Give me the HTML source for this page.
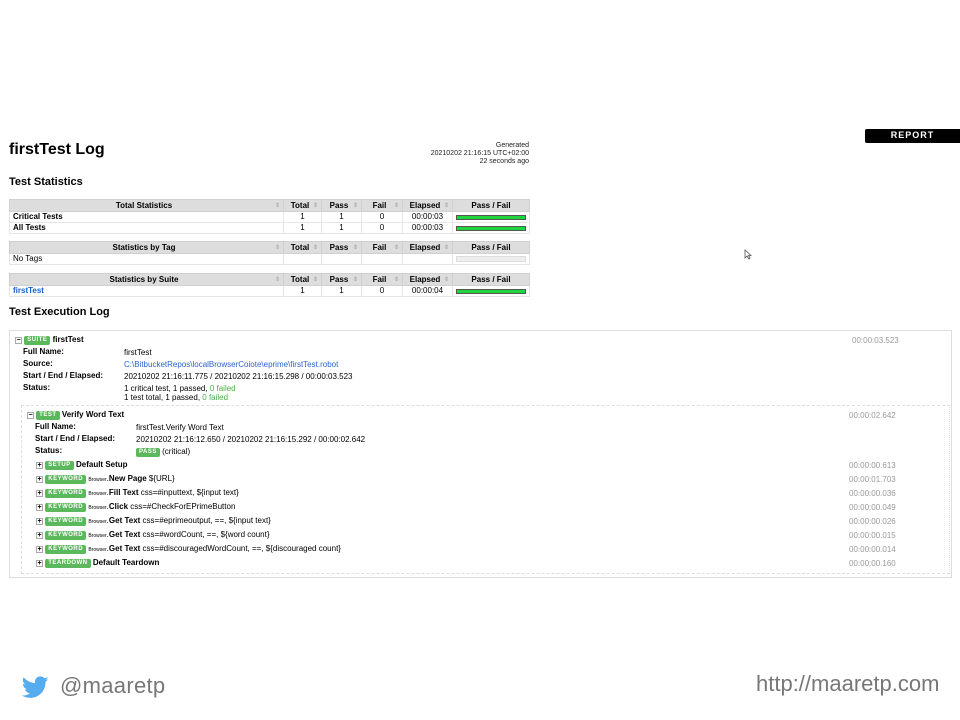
<!DOCTYPE html>
<html><head><meta charset="utf-8"><style>
*{margin:0;padding:0;box-sizing:border-box}
body{width:960px;height:720px;background:#fff;position:relative;overflow:hidden;font-family:"Liberation Sans",Arial,sans-serif;color:#000}
.a{position:absolute;white-space:nowrap}
table{position:absolute;left:9px;width:521px;border-collapse:collapse;font-size:8px}
td,th{height:11px;padding:0 3px;border:1px solid #e6e6e6;line-height:10px}
th{background:#ddd;font-weight:bold;text-align:center;border-color:#d0d0d0;height:12px}
th .s{float:right;color:#999;font-size:6px;font-weight:normal}
td.c{text-align:center}
.bar{height:5px;background:#1fd43d;border:1px solid #555;margin:0 auto}
.bar0{height:6px;background:#eee;border:1px solid #ddd}
.b{font-weight:bold}
.lbl{display:inline-block;background:#5cb85c;color:#fff;font-size:6px;font-weight:bold;padding:0 3px;height:9px;line-height:9px;border-radius:2px;letter-spacing:.5px;vertical-align:1px}
.pm{display:inline-block;width:7px;height:7px;border:1px solid #aaa;font-size:7px;line-height:5px;text-align:center;vertical-align:0;color:#000;font-weight:bold}
.t{font-size:8px;line-height:10px}
.g{color:#4cae4c}
.tm{color:#999;font-size:8px}
</style></head><body>
<div class="a" style="left:865px;top:129px;width:95px;height:14px;background:#000;border-radius:2px 0 0 2px;color:#fff;font-size:9px;font-weight:bold;letter-spacing:1px;text-align:center;line-height:13px">REPORT</div>
<div class="a" style="left:9px;top:141px;font-size:16px;font-weight:bold">firstTest Log</div>
<div class="a" style="left:400px;top:142px;width:129px;text-align:right;font-size:7px;line-height:8px;color:#222">Generated<br>20210202 21:16:15 UTC+02:00<br>22 seconds ago</div>
<div class="a" style="left:9px;top:176px;font-size:11px;font-weight:bold">Test Statistics</div>

<table style="top:199px">
<tr><th style="width:274px">Total Statistics <span class="s">⇕</span></th><th style="width:38px">Total <span class="s">⇕</span></th><th style="width:40px">Pass <span class="s">⇕</span></th><th style="width:41px">Fail <span class="s">⇕</span></th><th style="width:50px">Elapsed <span class="s">⇕</span></th><th>Pass / Fail</th></tr>
<tr><td class="b">Critical Tests</td><td class="c">1</td><td class="c">1</td><td class="c">0</td><td class="c">00:00:03</td><td><div class="bar"></div></td></tr>
<tr><td class="b">All Tests</td><td class="c">1</td><td class="c">1</td><td class="c">0</td><td class="c">00:00:03</td><td><div class="bar"></div></td></tr>
</table>
<table style="top:241px">
<tr><th style="width:274px">Statistics by Tag <span class="s">⇕</span></th><th style="width:38px">Total <span class="s">⇕</span></th><th style="width:40px">Pass <span class="s">⇕</span></th><th style="width:41px">Fail <span class="s">⇕</span></th><th style="width:50px">Elapsed <span class="s">⇕</span></th><th>Pass / Fail</th></tr>
<tr><td>No Tags</td><td></td><td></td><td></td><td></td><td><div class="bar0"></div></td></tr>
</table>
<table style="top:273px">
<tr><th style="width:274px">Statistics by Suite <span class="s">⇕</span></th><th style="width:38px">Total <span class="s">⇕</span></th><th style="width:40px">Pass <span class="s">⇕</span></th><th style="width:41px">Fail <span class="s">⇕</span></th><th style="width:50px">Elapsed <span class="s">⇕</span></th><th>Pass / Fail</th></tr>
<tr><td class="b" style="color:#1a5fd0">firstTest</td><td class="c">1</td><td class="c">1</td><td class="c">0</td><td class="c">00:00:04</td><td><div class="bar"></div></td></tr>
</table>

<div class="a" style="left:9px;top:306px;font-size:11px;font-weight:bold">Test Execution Log</div>
<div class="a" style="left:9px;top:330px;width:943px;height:248px;border:1px solid #ddd"></div>
<div class="a" style="left:21px;top:405px;width:929px;height:169px;border:1px dashed #ddd;border-right-style:dotted"></div>

<div class="a t" style="left:15px;top:335px"><span class="pm">−</span> <span class="lbl">SUITE</span> <b>firstTest</b></div>
<div class="a tm" style="left:852px;top:336px">00:00:03.523</div>
<div class="a t b" style="left:23px;top:347px">Full Name:</div><div class="a t" style="left:124px;top:348px">firstTest</div>
<div class="a t b" style="left:23px;top:359px">Source:</div><div class="a t" style="left:124px;top:360px;color:#2d62d3">C:\BitbucketRepos\localBrowserCoiote\eprime\firstTest.robot</div>
<div class="a t b" style="left:23px;top:371px">Start / End / Elapsed:</div><div class="a t" style="left:124px;top:372px">20210202 21:16:11.775 / 20210202 21:16:15.298 / 00:00:03.523</div>
<div class="a t b" style="left:23px;top:383px">Status:</div><div class="a t" style="left:124px;top:384px">1 critical test, 1 passed, <span class="g">0 failed</span></div>
<div class="a t" style="left:124px;top:393px">1 test total, 1 passed, <span class="g">0 failed</span></div>

<div class="a t" style="left:27px;top:410px"><span class="pm">−</span> <span class="lbl">TEST</span> <b>Verify Word Text</b></div>
<div class="a tm" style="left:849px;top:411px">00:00:02.642</div>
<div class="a t b" style="left:35px;top:422px">Full Name:</div><div class="a t" style="left:136px;top:423px">firstTest.Verify Word Text</div>
<div class="a t b" style="left:35px;top:434px">Start / End / Elapsed:</div><div class="a t" style="left:136px;top:435px">20210202 21:16:12.650 / 20210202 21:16:15.292 / 00:00:02.642</div>
<div class="a t b" style="left:35px;top:446px">Status:</div><div class="a t" style="left:136px;top:447px"><span class="lbl">PASS</span> (critical)</div>

<div class="a t" style="left:36px;top:460px"><span class="pm">+</span> <span class="lbl">SETUP</span> <b>Default Setup</b></div><div class="a tm" style="left:849px;top:461px">00:00:00.613</div>
<div class="a t" style="left:36px;top:474px"><span class="pm">+</span> <span class="lbl">KEYWORD</span> <span style="font-size:5px">Browser</span>.<b>New Page</b> ${URL}</div><div class="a tm" style="left:849px;top:475px">00:00:01.703</div>
<div class="a t" style="left:36px;top:488px"><span class="pm">+</span> <span class="lbl">KEYWORD</span> <span style="font-size:5px">Browser</span>.<b>Fill Text</b> css=#inputtext, ${input text}</div><div class="a tm" style="left:849px;top:489px">00:00:00.036</div>
<div class="a t" style="left:36px;top:502px"><span class="pm">+</span> <span class="lbl">KEYWORD</span> <span style="font-size:5px">Browser</span>.<b>Click</b> css=#CheckForEPrimeButton</div><div class="a tm" style="left:849px;top:503px">00:00:00.049</div>
<div class="a t" style="left:36px;top:516px"><span class="pm">+</span> <span class="lbl">KEYWORD</span> <span style="font-size:5px">Browser</span>.<b>Get Text</b> css=#eprimeoutput, ==, ${input text}</div><div class="a tm" style="left:849px;top:517px">00:00:00.026</div>
<div class="a t" style="left:36px;top:530px"><span class="pm">+</span> <span class="lbl">KEYWORD</span> <span style="font-size:5px">Browser</span>.<b>Get Text</b> css=#wordCount, ==, ${word count}</div><div class="a tm" style="left:849px;top:531px">00:00:00.015</div>
<div class="a t" style="left:36px;top:544px"><span class="pm">+</span> <span class="lbl">KEYWORD</span> <span style="font-size:5px">Browser</span>.<b>Get Text</b> css=#discouragedWordCount, ==, ${discouraged count}</div><div class="a tm" style="left:849px;top:545px">00:00:00.014</div>
<div class="a t" style="left:36px;top:558px"><span class="pm">+</span> <span class="lbl">TEARDOWN</span> <b>Default Teardown</b></div><div class="a tm" style="left:849px;top:559px">00:00:00.160</div>

<svg class="a" style="left:744px;top:249px" width="8" height="11" viewBox="0 0 8 11"><path d="M1 1 L1 9 L3 7 L5 10 L6 9 L4.5 6.5 L7 6.5 Z" fill="#fff" stroke="#555" stroke-width=".8"/></svg>

<svg class="a" style="left:22px;top:676px" width="27" height="23" viewBox="0 0 24 20"><path d="M23.6 2.4c-.9.4-1.8.6-2.8.8 1-.6 1.8-1.5 2.1-2.7-.9.6-2 1-3.1 1.2C18.9.7 17.7.1 16.3.1c-2.7 0-4.8 2.2-4.8 4.8 0 .4 0 .8.1 1.1C7.5 5.8 3.9 3.9 1.5.9c-.4.7-.7 1.6-.7 2.4 0 1.7.9 3.2 2.2 4-.8 0-1.5-.2-2.2-.6v.1c0 2.3 1.7 4.3 3.9 4.7-.4.1-.8.2-1.3.2-.3 0-.6 0-.9-.1.6 1.9 2.4 3.3 4.5 3.4-1.7 1.3-3.7 2.1-6 2.1-.4 0-.8 0-1.2-.1 2.1 1.4 4.7 2.2 7.4 2.2 8.9 0 13.7-7.4 13.7-13.7v-.6c1-.7 1.8-1.6 2.4-2.5z" fill="#55acee"/></svg>
<div class="a" style="left:60px;top:673px;font-size:22px;color:#777;font-family:'Liberation Sans',sans-serif;letter-spacing:.3px">@maaretp</div>
<div class="a" style="left:756px;top:671px;font-size:22px;color:#777;font-family:'Liberation Sans',sans-serif">http://maaretp.com</div>
</body></html>
